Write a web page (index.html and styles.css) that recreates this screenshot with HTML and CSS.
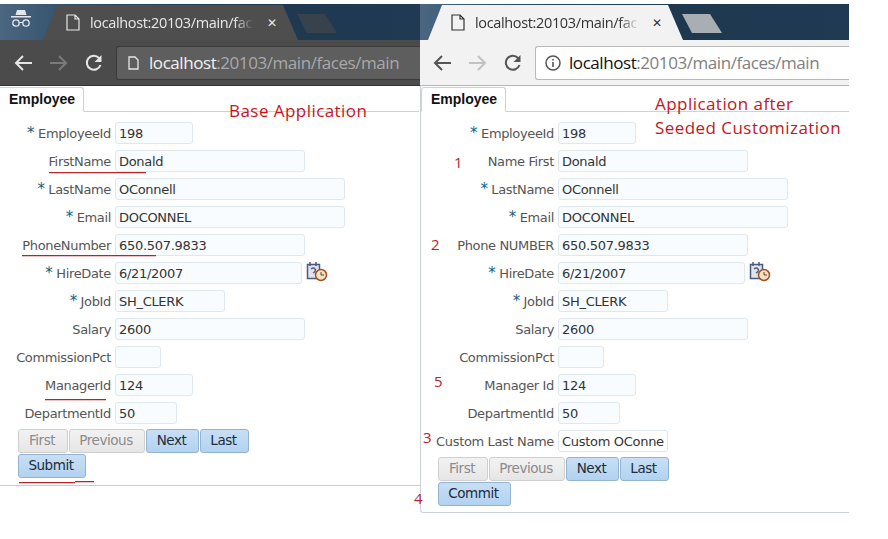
FILE: index.html
```html
<!DOCTYPE html>
<html lang="en">
<head>
<meta charset="utf-8">
<title>Base and customized application</title>
<link rel="stylesheet" href="styles.css">
</head>
<body>
<main class="stage">
  <section class="shot shot-base">
    <div class="tabstrip">
      <svg class="incognito" width="22" height="20" viewBox="0 0 22 20"><path d="M7 1h8l1.500 5h-11z" fill="#e4e8ec"/><rect x="1" y="7" width="20" height="1.500" fill="#e4e8ec"/><circle cx="6" cy="14" r="3.200" fill="none" stroke="#e4e8ec" stroke-width="1.300"/><circle cx="16" cy="14" r="3.200" fill="none" stroke="#e4e8ec" stroke-width="1.300"/><path d="M9 13.500h4" stroke="#e4e8ec"/></svg>
      <div class="tab">
        <svg class="page" width="14" height="17" viewBox="0 0 14 17"><path d="M1 1h8l4 4v11H1zM9 1v4h4" fill="none" stroke="currentColor" stroke-width="1.200"/></svg>
        <span class="tab-title">localhost:20103/main/fac</span>
        <span class="tab-close">✕</span>
      </div>
      <div class="new-tab"></div>
    </div>
    <div class="toolbar">
      <svg class="nav" width="22" height="20" viewBox="0 0 22 20"><path d="M19 10H4M10 3l-7 7 7 7" fill="none" stroke="currentColor" stroke-width="2"/></svg>
      <svg class="nav nav-off" width="22" height="20" viewBox="0 0 22 20"><path d="M3 10h15M12 3l7 7-7 7" fill="none" stroke="currentColor" stroke-width="2"/></svg>
      <svg class="nav" width="20" height="20" viewBox="0 0 20 20"><path d="M16.500 12a7 7 0 1 1-1.500-7" fill="none" stroke="currentColor" stroke-width="2"/><path d="M17.500 2v7h-7z" fill="currentColor"/></svg>
      <div class="omnibox">
        <svg class="page page-small" width="11" height="14" viewBox="0 0 11 14"><path d="M1 1h6l3 3v9H1z" fill="none" stroke="currentColor" stroke-width="1.300"/></svg>
        <span class="host">localhost</span><span class="path">:20103/main/faces/main</span>
      </div>
    </div>
    <div class="app">
      <div class="app-tabs"><span class="app-tab">Employee</span></div>
      <div class="form">
        <div class="row"><label class="lbl"><i>*</i> EmployeeId</label><span class="field w78">198</span></div>
        <div class="row"><label class="lbl">FirstName</label><span class="field w190">Donald</span></div>
        <div class="row"><label class="lbl"><i>*</i> LastName</label><span class="field w230">OConnell</span></div>
        <div class="row"><label class="lbl"><i>*</i> Email</label><span class="field w230">DOCONNEL</span></div>
        <div class="row"><label class="lbl">PhoneNumber</label><span class="field w190">650.507.9833</span></div>
        <div class="row"><label class="lbl"><i>*</i> HireDate</label><span class="field w187">6/21/2007</span>
          <svg class="cal" width="22" height="20" viewBox="0 0 22 20"><rect x="1.500" y="2.500" width="12" height="14" fill="#dfe3ee" stroke="#4c5a80" stroke-width="1.500"/><path d="M4 0v4M10 0v4" stroke="#4c5a80" stroke-width="1.500"/><path d="M5 7q2.500-2 4 0t-2 4" fill="none" stroke="#5a5f70" stroke-width="1.400"/><circle cx="15" cy="13" r="5.500" fill="#f3e3c6" stroke="#a5501e" stroke-width="1.500"/><path d="M15 10v3h3" fill="none" stroke="#7a3a10"/></svg></div>
        <div class="row"><label class="lbl"><i>*</i> JobId</label><span class="field w110">SH_CLERK</span></div>
        <div class="row"><label class="lbl">Salary</label><span class="field w190">2600</span></div>
        <div class="row"><label class="lbl">CommissionPct</label><span class="field w46"></span></div>
        <div class="row"><label class="lbl">ManagerId</label><span class="field w78">124</span></div>
        <div class="row"><label class="lbl">DepartmentId</label><span class="field w62">50</span></div>
        <div class="buttons">
          <div class="btn-row"><span class="btn off w50">First</span><span class="btn off w76">Previous</span><span class="btn w53">Next</span><span class="btn w49">Last</span></div>
          <div class="btn-row"><span class="btn w68">Submit</span></div>
        </div>
      </div>
    </div>
    <span class="note note-base">Base Application</span>
    <span class="ink ink-first"></span>
    <span class="ink ink-phone"></span>
    <span class="ink ink-manager"></span>
    <span class="ink ink-submit1"></span>
    <span class="ink ink-submit2"></span>
  </section>

  <section class="shot shot-custom">
    <div class="tabstrip">
      <div class="tab">
        <svg class="page" width="14" height="17" viewBox="0 0 14 17"><path d="M1 1h8l4 4v11H1zM9 1v4h4" fill="none" stroke="currentColor" stroke-width="1.200"/></svg>
        <span class="tab-title">localhost:20103/main/fac</span>
        <span class="tab-close">✕</span>
      </div>
      <div class="new-tab"></div>
    </div>
    <div class="toolbar">
      <svg class="nav" width="22" height="20" viewBox="0 0 22 20"><path d="M19 10H4M10 3l-7 7 7 7" fill="none" stroke="currentColor" stroke-width="2"/></svg>
      <svg class="nav nav-off" width="22" height="20" viewBox="0 0 22 20"><path d="M3 10h15M12 3l7 7-7 7" fill="none" stroke="currentColor" stroke-width="2"/></svg>
      <svg class="nav" width="20" height="20" viewBox="0 0 20 20"><path d="M16.500 12a7 7 0 1 1-1.500-7" fill="none" stroke="currentColor" stroke-width="2"/><path d="M17.500 2v7h-7z" fill="currentColor"/></svg>
      <div class="omnibox">
        <svg class="page info" width="16" height="16" viewBox="0 0 16 16"><circle cx="8" cy="8" r="7" fill="none" stroke="currentColor" stroke-width="1.500"/><path d="M8 7v5M8 4v1.600" stroke="currentColor" stroke-width="1.600"/></svg>
        <span class="host">localhost</span><span class="path">:20103/main/faces/main</span>
      </div>
    </div>
    <div class="app">
      <div class="app-tabs"><span class="app-tab">Employee</span></div>
      <div class="form">
        <div class="row"><label class="lbl"><i>*</i> EmployeeId</label><span class="field w78">198</span></div>
        <div class="row"><label class="lbl">Name First</label><span class="field w190">Donald</span></div>
        <div class="row"><label class="lbl"><i>*</i> LastName</label><span class="field w230">OConnell</span></div>
        <div class="row"><label class="lbl"><i>*</i> Email</label><span class="field w230">DOCONNEL</span></div>
        <div class="row"><label class="lbl">Phone NUMBER</label><span class="field w190">650.507.9833</span></div>
        <div class="row"><label class="lbl"><i>*</i> HireDate</label><span class="field w187">6/21/2007</span>
          <svg class="cal" width="22" height="20" viewBox="0 0 22 20"><rect x="1.500" y="2.500" width="12" height="14" fill="#dfe3ee" stroke="#4c5a80" stroke-width="1.500"/><path d="M4 0v4M10 0v4" stroke="#4c5a80" stroke-width="1.500"/><path d="M5 7q2.500-2 4 0t-2 4" fill="none" stroke="#5a5f70" stroke-width="1.400"/><circle cx="15" cy="13" r="5.500" fill="#f3e3c6" stroke="#a5501e" stroke-width="1.500"/><path d="M15 10v3h3" fill="none" stroke="#7a3a10"/></svg></div>
        <div class="row"><label class="lbl"><i>*</i> JobId</label><span class="field w110">SH_CLERK</span></div>
        <div class="row"><label class="lbl">Salary</label><span class="field w190">2600</span></div>
        <div class="row"><label class="lbl">CommissionPct</label><span class="field w46"></span></div>
        <div class="row"><label class="lbl">Manager Id</label><span class="field w78">124</span></div>
        <div class="row"><label class="lbl">DepartmentId</label><span class="field w62">50</span></div>
        <div class="row"><label class="lbl">Custom Last Name</label><span class="field w110 clip">Custom OConne</span></div>
        <div class="buttons">
          <div class="btn-row"><span class="btn off w50">First</span><span class="btn off w76">Previous</span><span class="btn w53">Next</span><span class="btn w49">Last</span></div>
          <div class="btn-row"><span class="btn w73">Commit</span></div>
        </div>
      </div>
    </div>
    <span class="note note-custom">Application after<br>Seeded Customization</span>
    <span class="num num1">1</span>
    <span class="num num2">2</span>
    <span class="num num5">5</span>
    <span class="num num3">3</span>
    <span class="num num4">4</span>
  </section>
</main>
</body>
</html>
```
FILE: styles.css
```css
* { box-sizing: border-box; }
html, body { margin: 0; padding: 0; background: #fff; }
body { width: 888px; height: 539px; overflow: hidden; font-family: "DejaVu Sans", sans-serif; }

.stage { display: flex; align-items: flex-start; padding-top: 4px; }
.shot { position: relative; flex: none; overflow: visible; }
.shot-base { width: 420px; height: 482px; border-bottom: 1px solid #c6cdd2; }
.shot-custom { width: 429px; height: 510px; }

/* browser chrome */
.tabstrip { display: flex; height: 36px; align-items: flex-end; background: linear-gradient(90deg, #4a6680 0, #2c4a66 22%, #1e3850 60%, #1f3a52 100%); }
.shot-base .tabstrip { padding-left: 10px; }
.shot-custom .tabstrip { padding-left: 8px; }
.incognito { flex: none; align-self: flex-start; margin-top: 5px; }
.tab { flex: none; display: flex; align-items: center; width: 255px; height: 35px; padding-left: 23px; clip-path: polygon(14px 0, 240px 0, 255px 100%, 0 100%); }
.shot-base .tab { background: #4e4e4e; color: #e8e8e8; margin-left: 11px; }
.shot-custom .tab { background: #f2f2f2; color: #333; }
.page { flex: none; }
.tab-title { flex: none; width: 164px; margin-left: 10px; overflow: hidden; white-space: nowrap; font: 14.500px "Open Sans", sans-serif; letter-spacing: -0.350px; -webkit-mask-image: linear-gradient(90deg, #000 88%, transparent 100%); mask-image: linear-gradient(90deg, #000 88%, transparent 100%); }
.tab-close { margin-left: 13px; font-size: 12px; }
.new-tab { flex: none; width: 40px; height: 19px; margin: 0 0 7px -1px; clip-path: polygon(0 0, 28px 0, 40px 100%, 10px 100%); }
.shot-base .new-tab { background: #38424d; }
.shot-custom .new-tab { background: #a9aeb3; }

.toolbar { display: flex; align-items: center; height: 46px; padding: 0 0 0 13px; border-bottom: 1px solid #333; }
.shot-base .toolbar { background: #4b4b4b; color: #e6e6e6; }
.shot-custom .toolbar { background: #f2f2f2; color: #555; border-bottom-color: #b5b5b5; padding-left: 12px; }
.nav { flex: none; margin-right: 12px; }
.nav-off { opacity: .3; margin-right: 15px; }
.omnibox { flex: 1; display: flex; align-items: center; height: 34px; padding-left: 11px; border: 1px solid #3a3a3a; border-right: 0; border-radius: 3px 0 0 3px; white-space: nowrap; overflow: hidden; font: 17px "Open Sans", sans-serif; letter-spacing: -0.440px; }
.shot-base .omnibox { background: #5e5e5e; }
.shot-custom .omnibox { background: #fff; border-color: #b9b9b9; padding-left: 9px; }
.page-small { margin-right: 10px; }
.info { margin-right: 8px; }
.shot-base .host { color: #f2f2f2; }
.shot-custom .host { color: #111; }
.shot-base .path { color: #a9a9a9; }
.shot-custom .path { color: #808080; }

/* application */
.app { position: relative; }
.app-tabs { display: flex; height: 26px; padding: 1px 0 0 0; border-bottom: 1px solid #cbd3d8; }
.shot-base .app-tabs { width: 419px; }
.app-tab { display: block; height: 25px; padding: 3px 8px 0 9px; background: #fff; border: 1px solid #cbd3d8; border-width: 1px 1px 1px 0; border-bottom-color: #fff; border-radius: 0 3px 0 0; font: bold 14px "Liberation Sans", sans-serif; color: #111; }
.shot-custom .app-tab { border-left-width: 1px; border-radius: 3px 3px 0 0; }
.form { padding-top: 7px; }
.shot-custom .app { border-left: 1px solid #cbd3d8; border-bottom: 1px solid #cbd3d8; height: 427px; border-radius: 0 0 0 3px; }

.row { display: flex; align-items: center; height: 28px; }
.lbl { flex: none; width: 115px; padding-right: 4px; text-align: right; white-space: nowrap; font-size: 13px; letter-spacing: -0.350px; color: #555; }
.shot-custom .lbl { width: 137px; }
.lbl i { font-style: normal; color: #16617d; font-size: 15px; }
.field { flex: none; display: block; height: 22px; padding: 3px 0 0 3px; background: #f8fcff; border: 1px solid #dfe8ee; border-radius: 3px; font-size: 13px; line-height: 16px; letter-spacing: -0.300px; color: #333; white-space: nowrap; overflow: hidden; }
.clip { background: #fff; }
.w46 { width: 46px; } .w62 { width: 62px; } .w78 { width: 78px; } .w110 { width: 110px; }
.w187 { width: 187px; } .w190 { width: 190px; } .w230 { width: 230px; }
.cal { flex: none; margin-left: 4px; margin-top: -2px; }

.buttons { padding: 2px 0 0 18px; }
.shot-custom .buttons { padding-left: 17px; }
.btn-row { display: flex; gap: 1px; height: 25px; }
.btn { flex: none; display: block; height: 24px; padding-top: 1px; padding-right: 2px; text-align: center; font-size: 13.500px; letter-spacing: -0.450px; line-height: 18px; color: #1c2c3c; background: linear-gradient(#c8dff5, #b2d2f0); border: 1px solid #93b3d0; border-radius: 3px; }
.btn.off { color: #8b8b8b; background: linear-gradient(#f2f2f2, #e6e6e6); border-color: #cfcfcf; }
.w50 { width: 50px; } .w76 { width: 76px; } .w53 { width: 53px; } .w49 { width: 49px; } .w68 { width: 68px; } .w73 { width: 73px; }

/* annotations laid over the screenshots */
.note { position: absolute; font: 17px/24px "Open Sans", sans-serif; letter-spacing: .45px; color: #c4161c; white-space: nowrap; }
.note-base { left: 229px; top: 95px; }
.note-custom { left: 235px; top: 88px; }
.ink { position: absolute; height: 2px; background: linear-gradient(#b3262e 50%, #ecc4c6 50%); }
.ink-first { left: 49px; width: 97px; top: 168px; }
.ink-phone { left: 22px; width: 134px; top: 251px; }
.ink-manager { left: 45px; width: 61px; top: 395px; }
.ink-submit1 { left: 19px; width: 56px; top: 478px; }
.ink-submit2 { left: 75px; width: 19px; top: 477px; }
.num { position: absolute; font: 15px/18px "Open Sans", sans-serif; color: #b3262e; }
.num1 { left: 34px; top: 149px; }
.num2 { left: 11px; top: 231px; }
.num5 { left: 14px; top: 368px; }
.num3 { left: 3px; top: 424px; }
.num4 { left: -6px; top: 485px; }
```
